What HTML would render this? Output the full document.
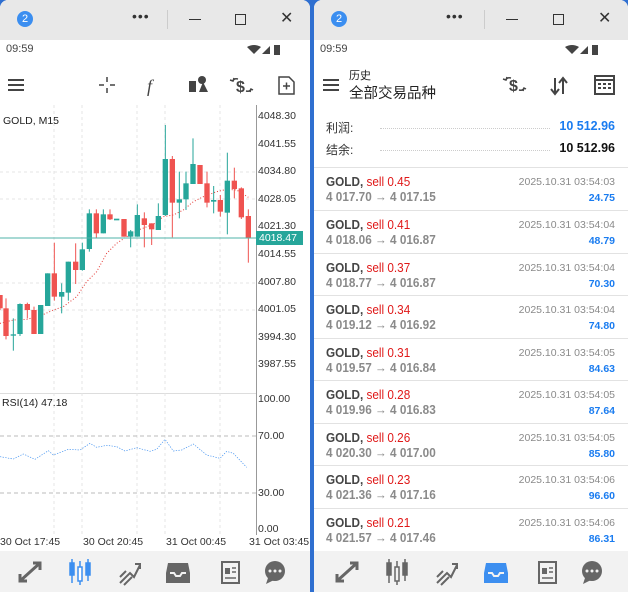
<!DOCTYPE html>
<html><head><meta charset="utf-8"><style>
*{margin:0;padding:0;box-sizing:border-box}
body{width:628px;height:592px;background:#2f6fd0;position:relative;overflow:hidden;font-family:"Liberation Sans","Noto Sans CJK SC",sans-serif}
.win{position:absolute;top:0;height:592px;background:#fff;border-radius:8px 8px 0 0;overflow:hidden}
.tb{position:absolute;left:0;top:0;right:0;height:40px;background:#e8e8e8}
.badge{position:absolute;left:17px;top:11px;width:16px;height:16px;border-radius:50%;background:#3b8ef0;color:#fff;font-size:11px;text-align:center;line-height:16px}
.dots{position:absolute;left:132px;top:8px;font-size:14px;color:#333;letter-spacing:1px}
.sep{position:absolute;left:167px;top:10px;width:1px;height:19px;background:#ccc}
.abs{position:absolute}
.st{position:absolute;left:6px;top:43px;font-size:11px;color:#444}
.row{position:absolute;left:0;width:314px;height:43px;border-top:1px solid #e2e2e2}
.t1{position:absolute;left:12px;top:7px;font-size:12.5px;font-weight:bold;color:#444;transform:scaleX(.94);transform-origin:left}
.t1 span{color:#e01818;font-weight:normal}
.t2{position:absolute;left:12px;top:22px;font-size:12.5px;font-weight:bold;color:#8a8a8a;transform:scaleX(.94);transform-origin:left}
.dt{position:absolute;right:13px;top:8px;font-size:10.5px;color:#8a8a8a}
.pf{position:absolute;right:13px;top:24px;font-size:10.5px;font-weight:bold;color:#1a7cf0}
.nav{position:absolute;left:0;bottom:0;width:100%;height:41px;background:#f2f2f2}
.ax{position:absolute;left:258px;font-size:10.5px;color:#333}
.tl{position:absolute;top:536px;font-size:10.5px;color:#333}
</style></head><body>

<div class="win" style="left:0;width:310px">
<div class="tb"><div class="badge">2</div><div class="dots">•••</div><div class="sep"></div>
<div class="abs" style="left:189px;top:19px;width:12px;height:1px;background:#333"></div>
<div class="abs" style="left:235px;top:14px;width:11px;height:11px;border:1.3px solid #333"></div>
<div class="abs" style="left:280px;top:8px;font-size:16px;color:#333">✕</div></div>
<div class="st">09:59</div>
<svg class="abs" style="left:246px;top:43px" width="40" height="14"><path d="M1 4 Q8 0 15 4 L8 11Z" fill="#444"/><path d="M16 11 L24 3 L24 11Z" fill="#444"/><rect x="28" y="2" width="6" height="10" fill="#444"/></svg>
<svg class="abs" style="left:0;top:70px" width="310" height="30" fill="#444" stroke="#444">
<g stroke-width="2"><line x1="8" y1="10" x2="24" y2="10"/><line x1="8" y1="15" x2="24" y2="15"/><line x1="8" y1="20" x2="24" y2="20"/></g>
<g stroke-width="1.5"><line x1="99" y1="15" x2="104" y2="15"/><line x1="110" y1="15" x2="115" y2="15"/><line x1="107" y1="7" x2="107" y2="12"/><line x1="107" y1="18" x2="107" y2="23"/></g>
<text x="147" y="22" font-size="18" font-style="italic" stroke="none" font-family="Liberation Serif">f</text>
<path d="M189 11 L196 11 L196 22 L189 22Z M199 22 L203 12 L208 22Z" stroke="none"/><circle cx="202" cy="10" r="4" stroke="none"/>
<text x="236" y="22" font-size="16" font-weight="bold" stroke="none">$</text>
<path d="M238 9 Q234 8 233 11 M230 10 L233 11 L234 8 M246 21 Q250 22 251 19 M253 20 L251 19 L250 22" fill="none" stroke-width="1.5"/>
<path d="M279 7 L289 7 L294 12 L294 24 L279 24Z" fill="none" stroke-width="1.5"/><path d="M283 16 L290 16 M286.5 12.5 L286.5 19.5" stroke-width="1.5"/>
</svg>
<div class="abs" style="left:0;top:105px;width:256px;height:289px;border-bottom:1px solid #ddd"></div>
<svg class="abs" style="left:0;top:105px" width="256" height="430">
<g stroke="#e4e4e4" stroke-dasharray="3,3"><line x1="54" y1="0" x2="54" y2="430"/><line x1="82" y1="0" x2="82" y2="430"/><line x1="137" y1="0" x2="137" y2="430"/><line x1="165" y1="0" x2="165" y2="430"/><line x1="220" y1="0" x2="220" y2="430"/>
<line x1="0" y1="67" x2="256" y2="67"/><line x1="0" y1="94" x2="256" y2="94"/><line x1="0" y1="178" x2="256" y2="178"/><line x1="0" y1="205" x2="256" y2="205"/></g>
<g stroke="#bbb" stroke-dasharray="4,3"><line x1="0" y1="331" x2="256" y2="331"/><line x1="0" y1="388" x2="256" y2="388"/></g>
</svg>
<svg class="abs" style="left:0;top:110px" width="310" height="250" viewBox="0 0 930 750">
<polyline fill="none" stroke="#e53935" stroke-width="3" stroke-dasharray="3,6" points="0,640 40,630 80,628 120,618 160,600 190,590 230,560 260,515 290,485 320,430 350,400 380,380 420,358 460,343 490,320 520,315 550,300 580,275 610,260 650,245 680,238 710,240 745,262"/>
<g stroke-width="3" id="c"></g>
<line x1="0" y1="384" x2="770" y2="384" stroke="#4fb3a9" stroke-width="3"/>
</svg>
<script>
var d=[[0,555,555,595,600,'r'],[18,565,595,678,688,'r'],[40,625,673,676,722,'g'],[60,580,582,672,678,'g'],[82,578,582,600,625,'r'],[102,590,600,672,672,'r'],[122,585,585,672,672,'g'],[143,490,490,588,588,'g'],[163,398,490,560,572,'r'],[185,520,546,560,610,'g'],[205,455,455,548,572,'g'],[227,400,455,480,522,'r'],[247,398,418,480,482,'g'],[268,298,310,417,425,'g'],[289,298,310,370,385,'r'],[310,298,313,370,370,'g'],[330,298,313,328,330,'r'],[350,327,326,331,330,'g'],[372,327,327,380,380,'r'],[392,360,364,380,412,'g'],[412,283,315,380,380,'g'],[433,307,325,345,412,'r'],[455,340,340,358,405,'r'],[475,280,318,360,360,'g'],[496,45,147,315,318,'g'],[517,138,147,278,382,'r'],[538,185,268,278,325,'g'],[558,185,220,268,300,'g'],[579,85,162,222,222,'g'],[600,165,165,222,222,'r'],[621,185,220,278,292,'r'],[641,228,270,275,310,'g'],[661,255,270,305,320,'r'],[682,128,212,308,373,'g'],[703,173,212,237,265,'r'],[724,232,235,322,327,'r'],[745,298,318,385,458,'r']];
var s='';d.forEach(function(c){var col=c[5]=='g'?'#26a69a':'#ef5350';s+='<line x1="'+c[0]+'" y1="'+c[1]+'" x2="'+c[0]+'" y2="'+c[4]+'" stroke="'+col+'"/><rect x="'+(c[0]-8)+'" y="'+c[2]+'" width="16" height="'+Math.max(c[3]-c[2],4)+'" fill="'+col+'"/>';});
document.getElementById('c').innerHTML=s;
</script>
<svg class="abs" style="left:0;top:380px" width="256" height="160" viewBox="0 0 768 480">
<polyline fill="none" stroke="#3d8ff0" stroke-width="2" stroke-dasharray="4,4" points="0,230 40,237 70,222 105,238 145,212 160,225 205,208 240,210 270,190 290,202 320,196 350,200 375,213 410,203 450,214 470,208 495,178 520,213 545,210 580,192 620,225 660,235 680,214 700,220 740,262"/>
</svg>
<div class="abs" style="left:256px;top:105px;width:1px;height:430px;background:#999"></div>
<div class="abs" style="left:3px;top:115px;font-size:10.5px;color:#222">GOLD, M15</div>
<div class="abs" style="left:2px;top:397px;font-size:10.5px;color:#222">RSI(14) 47.18</div>
<div class="ax" style="top:110px">4048.30</div><div class="ax" style="top:138px">4041.55</div><div class="ax" style="top:165px">4034.80</div><div class="ax" style="top:193px">4028.05</div><div class="ax" style="top:220px">4021.30</div>
<div class="abs" style="left:256px;top:231px;width:47px;height:14px;background:#26a69a;color:#fff;font-size:10.5px;padding-left:3px;line-height:14px">4018.47</div>
<div class="ax" style="top:248px">4014.55</div><div class="ax" style="top:276px">4007.80</div><div class="ax" style="top:303px">4001.05</div><div class="ax" style="top:331px">3994.30</div><div class="ax" style="top:358px">3987.55</div>
<div class="ax" style="top:393px">100.00</div><div class="ax" style="top:430px">70.00</div><div class="ax" style="top:487px">30.00</div><div class="ax" style="top:523px">0.00</div>
<div class="tl" style="left:0">30 Oct 17:45</div><div class="tl" style="left:83px">30 Oct 20:45</div><div class="tl" style="left:166px">31 Oct 00:45</div><div class="tl" style="left:249px">31 Oct 03:45</div>
<div class="nav"><svg width="310" height="41" fill="#666" stroke="#666">
<path d="M20 30 L40 12 M33 12 L40 12 L40 19 M20 23 L20 30 L27 30" stroke-width="3" fill="none"/>
<g fill="#3d8ff0" stroke="#3d8ff0" stroke-width="1.5"><line x1="72" y1="8" x2="72" y2="32"/><rect x="70" y="12" width="4" height="12"/><line x1="80" y1="10" x2="80" y2="34"/><rect x="78" y="16" width="4" height="14" fill="#fff"/><line x1="88" y1="8" x2="88" y2="30"/><rect x="86" y="12" width="4" height="12"/></g>
<path d="M120 32 L130 22 L134 26 L140 14 M135 13 L140 13 L140 18 M120 26 L126 20 M124 34 L132 26" stroke-width="2" fill="none"/>
<path d="M168 12 L188 12 L190 22 L190 32 L166 32 L166 22Z" stroke="none"/><path d="M170 22 L174 22 L176 25 L180 25 L182 22 L186 22" stroke="#f2f2f2" stroke-width="2" fill="none"/>
<rect x="222" y="11" width="17" height="21" fill="none" stroke-width="2"/><rect x="225" y="17" width="5" height="6" stroke="none"/><path d="M232 17 L236 17 M232 21 L236 21 M225 27 L236 27" stroke-width="1.5"/>
<circle cx="275" cy="20" r="10" stroke="none"/><path d="M268 27 L266 33 L274 29Z" stroke="none"/><g fill="#f2f2f2" stroke="none"><circle cx="270" cy="20" r="1.5"/><circle cx="275" cy="20" r="1.5"/><circle cx="280" cy="20" r="1.5"/></g>
</svg></div>
</div>

<div class="win" style="left:314px;width:314px">
<div class="tb"><div class="badge">2</div><div class="dots">•••</div><div class="sep" style="left:170px"></div>
<div class="abs" style="left:192px;top:19px;width:12px;height:1px;background:#333"></div>
<div class="abs" style="left:239px;top:14px;width:11px;height:11px;border:1.3px solid #333"></div>
<div class="abs" style="left:284px;top:8px;font-size:16px;color:#333">✕</div></div>
<div class="st">09:59</div>
<svg class="abs" style="left:250px;top:43px" width="40" height="14"><path d="M1 4 Q8 0 15 4 L8 11Z" fill="#444"/><path d="M16 11 L24 3 L24 11Z" fill="#444"/><rect x="28" y="2" width="6" height="10" fill="#444"/></svg>
<svg class="abs" style="left:0;top:70px" width="314" height="30" fill="#444" stroke="#444">
<g stroke-width="2"><line x1="9" y1="10" x2="25" y2="10"/><line x1="9" y1="15" x2="25" y2="15"/><line x1="9" y1="20" x2="25" y2="20"/></g>
<text x="195" y="21" font-size="16" font-weight="bold" stroke="none">$</text>
<path d="M197 8 Q193 7 192 10 M189 9 L192 10 L193 7 M205 20 Q209 21 210 18 M212 19 L210 18 L209 21" fill="none" stroke-width="1.5"/>
<path d="M241 8 L241 24 M237 19 L241 24 L245 19 M249 8 L249 24 M245 13 L249 8 L253 13" stroke-width="2" fill="none"/>
<rect x="281" y="6" width="19" height="18" fill="none" stroke-width="2"/><line x1="281" y1="10" x2="300" y2="10" stroke-width="2"/><g stroke="none"><rect x="284" y="13" width="3" height="2"/><rect x="289" y="13" width="3" height="2"/><rect x="294" y="13" width="3" height="2"/><rect x="284" y="17" width="3" height="2"/><rect x="289" y="17" width="3" height="2"/><rect x="294" y="17" width="3" height="2"/></g>
</svg>
<div class="abs" style="left:35px;top:67px;font-size:11px;color:#222">历史</div>
<div class="abs" style="left:35px;top:82px;font-size:14.5px;color:#222">全部交易品种</div>
<div class="abs" style="left:12px;top:119px;font-size:12px;color:#333">利润:</div>
<div class="abs" style="left:12px;top:141px;font-size:12px;color:#333">结余:</div>
<div class="abs" style="left:66px;top:128px;width:170px;border-top:1px dotted #ccc"></div>
<div class="abs" style="left:66px;top:150px;width:170px;border-top:1px dotted #ccc"></div>
<div class="abs" style="right:13px;top:119px;font-size:12.5px;font-weight:bold;color:#1a7cf0">10 512.96</div>
<div class="abs" style="right:13px;top:141px;font-size:12.5px;font-weight:bold;color:#111">10 512.96</div>
<div class="row" style="top:167px"><div class="t1">GOLD, <span>sell 0.45</span></div><div class="t2">4 017.70 → 4 017.15</div><div class="dt">2025.10.31 03:54:03</div><div class="pf">24.75</div></div>
<div class="row" style="top:210px"><div class="t1">GOLD, <span>sell 0.41</span></div><div class="t2">4 018.06 → 4 016.87</div><div class="dt">2025.10.31 03:54:04</div><div class="pf">48.79</div></div>
<div class="row" style="top:253px"><div class="t1">GOLD, <span>sell 0.37</span></div><div class="t2">4 018.77 → 4 016.87</div><div class="dt">2025.10.31 03:54:04</div><div class="pf">70.30</div></div>
<div class="row" style="top:295px"><div class="t1">GOLD, <span>sell 0.34</span></div><div class="t2">4 019.12 → 4 016.92</div><div class="dt">2025.10.31 03:54:04</div><div class="pf">74.80</div></div>
<div class="row" style="top:338px"><div class="t1">GOLD, <span>sell 0.31</span></div><div class="t2">4 019.57 → 4 016.84</div><div class="dt">2025.10.31 03:54:05</div><div class="pf">84.63</div></div>
<div class="row" style="top:380px"><div class="t1">GOLD, <span>sell 0.28</span></div><div class="t2">4 019.96 → 4 016.83</div><div class="dt">2025.10.31 03:54:05</div><div class="pf">87.64</div></div>
<div class="row" style="top:423px"><div class="t1">GOLD, <span>sell 0.26</span></div><div class="t2">4 020.30 → 4 017.00</div><div class="dt">2025.10.31 03:54:05</div><div class="pf">85.80</div></div>
<div class="row" style="top:465px"><div class="t1">GOLD, <span>sell 0.23</span></div><div class="t2">4 021.36 → 4 017.16</div><div class="dt">2025.10.31 03:54:06</div><div class="pf">96.60</div></div>
<div class="row" style="top:508px"><div class="t1">GOLD, <span>sell 0.21</span></div><div class="t2">4 021.57 → 4 017.46</div><div class="dt">2025.10.31 03:54:06</div><div class="pf">86.31</div></div>
<div class="nav"><svg width="314" height="41" fill="#666" stroke="#666">
<path d="M23 30 L43 12 M36 12 L43 12 L43 19 M23 23 L23 30 L30 30" stroke-width="3" fill="none"/>
<g stroke-width="1.5"><line x1="75" y1="8" x2="75" y2="32"/><rect x="73" y="12" width="4" height="12"/><line x1="83" y1="10" x2="83" y2="34"/><rect x="81" y="16" width="4" height="14" fill="#f2f2f2"/><line x1="91" y1="8" x2="91" y2="30"/><rect x="89" y="12" width="4" height="12"/></g>
<path d="M123 32 L133 22 L137 26 L143 14 M138 13 L143 13 L143 18 M123 26 L129 20 M127 34 L135 26" stroke-width="2" fill="none"/>
<path d="M172 12 L192 12 L194 22 L194 32 L170 32 L170 22Z" fill="#3d8ff0" stroke="none"/><path d="M174 22 L178 22 L180 25 L184 25 L186 22 L190 22" stroke="#f2f2f2" stroke-width="2" fill="none"/>
<rect x="225" y="11" width="17" height="21" fill="none" stroke-width="2"/><rect x="228" y="17" width="5" height="6" stroke="none"/><path d="M235 17 L239 17 M235 21 L239 21 M228 27 L239 27" stroke-width="1.5"/>
<circle cx="278" cy="20" r="10" stroke="none"/><path d="M271 27 L269 33 L277 29Z" stroke="none"/><g fill="#f2f2f2" stroke="none"><circle cx="273" cy="20" r="1.5"/><circle cx="278" cy="20" r="1.5"/><circle cx="283" cy="20" r="1.5"/></g>
</svg></div>
</div>
</body></html>
